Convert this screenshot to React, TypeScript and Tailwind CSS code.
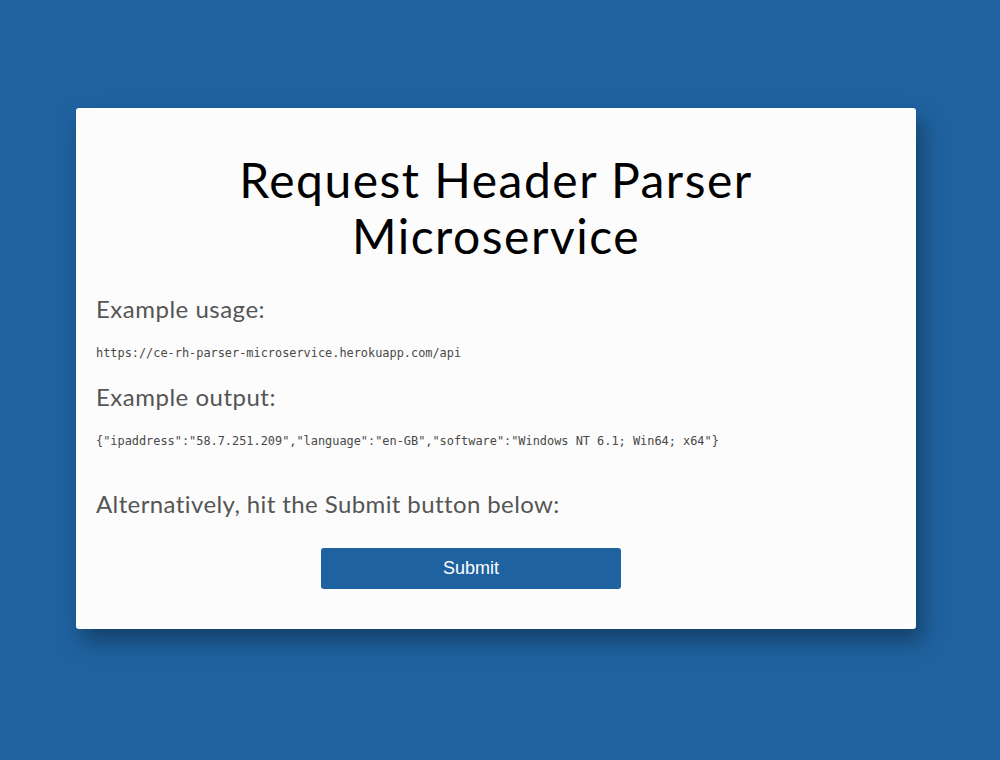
export default function App() {
  return (
    <div className="min-h-[760px] w-full bg-[#1f62a0] pt-[108px]" style={{ fontFamily: "Lato, 'Open Sans', sans-serif" }}>
      {/* Card */}
      <div className="ml-[76px] w-[840px] rounded-[3px] bg-[#fcfcfc] px-5 pt-[44px] pb-[40px] shadow-[6px_12px_22px_rgba(0,0,0,0.35)]">
        <h1 className="text-center text-[48px] leading-[56px] font-normal tracking-[1.5px] text-black">
          Request Header Parser
          <br />
          Microservice
        </h1>

        <h3 className="mt-[31px] text-[24px] leading-[28px] tracking-[0.5px] text-[#555]">Example usage:</h3>
        <code className="mt-[22px] block text-[11.9px] leading-[16px] text-[#484848] font-['DejaVu_Sans_Mono',monospace]">
          https://ce-rh-parser-microservice.herokuapp.com/api
        </code>

        <h3 className="mt-[22px] text-[24px] leading-[28px] tracking-[0.5px] text-[#555]">Example output:</h3>
        <code className="mt-[22px] block text-[11.9px] leading-[16px] text-[#484848] font-['DejaVu_Sans_Mono',monospace]">
          {'{"ipaddress":"58.7.251.209","language":"en-GB","software":"Windows NT 6.1; Win64; x64"}'}
        </code>

        <h3 className="mt-[41px] text-[24px] leading-[28px] tracking-[0.4px] text-[#555]">Alternatively, hit the Submit button below:</h3>

        <div className="mt-[30px] flex">
          <button
            type="submit"
            className="ml-[225px] h-[41px] w-[300px] rounded-[3px] bg-[#1f62a0] text-[18px] text-white font-['Liberation_Sans',Arial,sans-serif]"
          >
            Submit
          </button>
        </div>
      </div>
    </div>
  );
}
